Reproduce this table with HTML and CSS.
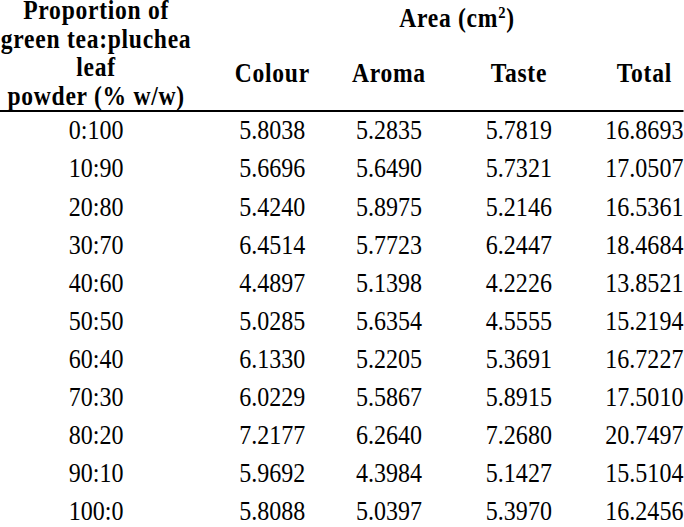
FILE: index.html
```html
<!DOCTYPE html>
<html>
<head>
<meta charset="utf-8">
<link rel="stylesheet" href="styles.css">
</head>
<body>
<div class="sheet">
  <div class="head">
    <div class="h-prop">Proportion of<br>green tea:pluchea<br>leaf<br>powder (% w/w)</div>
    <div class="h-right">
      <div class="h-area">Area (cm<sup>2</sup>)</div>
      <div class="h-sub">
        <div>Colour</div>
        <div>Aroma</div>
        <div>Taste</div>
        <div>Total</div>
      </div>
    </div>
  </div>
  <div class="rows">
    <div class="row"><div>0:100</div><div>5.8038</div><div>5.2835</div><div>5.7819</div><div>16.8693</div></div>
    <div class="row"><div>10:90</div><div>5.6696</div><div>5.6490</div><div>5.7321</div><div>17.0507</div></div>
    <div class="row"><div>20:80</div><div>5.4240</div><div>5.8975</div><div>5.2146</div><div>16.5361</div></div>
    <div class="row"><div>30:70</div><div>6.4514</div><div>5.7723</div><div>6.2447</div><div>18.4684</div></div>
    <div class="row"><div>40:60</div><div>4.4897</div><div>5.1398</div><div>4.2226</div><div>13.8521</div></div>
    <div class="row"><div>50:50</div><div>5.0285</div><div>5.6354</div><div>4.5555</div><div>15.2194</div></div>
    <div class="row"><div>60:40</div><div>6.1330</div><div>5.2205</div><div>5.3691</div><div>16.7227</div></div>
    <div class="row"><div>70:30</div><div>6.0229</div><div>5.5867</div><div>5.8915</div><div>17.5010</div></div>
    <div class="row"><div>80:20</div><div>7.2177</div><div>6.2640</div><div>7.2680</div><div>20.7497</div></div>
    <div class="row"><div>90:10</div><div>5.9692</div><div>4.3984</div><div>5.1427</div><div>15.5104</div></div>
    <div class="row"><div>100:0</div><div>5.8088</div><div>5.0397</div><div>5.3970</div><div>16.2456</div></div>
  </div>
</div>
</body>
</html>
```
FILE: styles.css
```css
html, body {
  margin: 0;
  padding: 0;
  background: #ffffff;
  overflow: hidden;
}

.sheet {
  width: 768px;
  margin-top: -4px;
  transform: scaleX(0.89);
  transform-origin: 0 0;
  font-family: "Liberation Serif", "Times New Roman", serif;
  color: #000000;
}

.head {
  display: flex;
  align-items: flex-start;
  border-bottom: 2px solid #000000;
  font-weight: bold;
  font-size: 26.5px;
  line-height: 28.6px;
  letter-spacing: 0.8px;
  text-align: center;
}

.h-prop {
  width: 224px;
  padding-right: 8px;
  box-sizing: border-box;
  flex: none;
}

.h-right {
  flex: 1;
  display: flex;
  flex-direction: column;
}

.h-area {
  padding-top: 7.75px;
  padding-left: 35px;
}

.h-area sup {
  font-size: 0.62em;
  line-height: 0;
  vertical-align: 0.55em;
}

.h-sub {
  margin-top: 26.4px;
  display: grid;
  grid-template-columns: 164px 98px 194px 88px;
}

.rows {
  font-size: 27px;
  line-height: 36px;
}

.row {
  display: grid;
  grid-template-columns: 224px 164px 98px 194px 88px;
  height: 38.1px;
  text-align: center;
}

.row > div:first-child {
  padding-right: 8px;
}
```
